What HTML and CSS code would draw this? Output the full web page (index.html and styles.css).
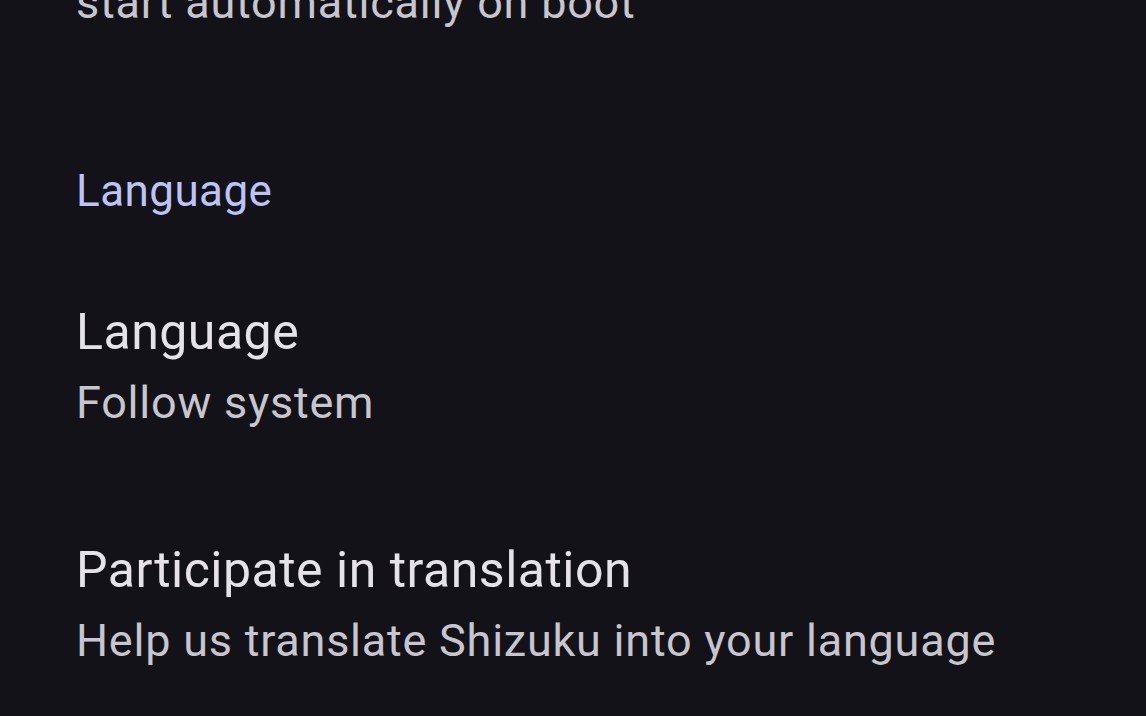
FILE: index.html
```html
<!DOCTYPE html>
<html lang="en">
<head>
<meta charset="utf-8">
<title>Settings</title>
<link rel="stylesheet" href="styles.css">
</head>
<body>
<main class="list">
  <div class="pref pref-partial">
    <div class="summary">start automatically on boot</div>
  </div>
  <div class="category">Language</div>
  <div class="pref">
    <div class="title">Language</div>
    <div class="summary">Follow system</div>
  </div>
  <div class="pref">
    <div class="title">Participate in translation</div>
    <div class="summary">Help us translate Shizuku into your language</div>
  </div>
</main>
</body>
</html>
```
FILE: styles.css
```css
html, body {
  margin: 0;
  padding: 0;
  background: #131218;
  height: 100%;
  overflow: hidden;
}
body {
  font-family: Roboto, "Noto Sans", sans-serif;
}
.list {
  display: flex;
  flex-direction: column;
  padding-left: 76px;
  margin-top: -33px;
}
.pref {
  display: flex;
  flex-direction: column;
  padding: 48px 0;
}
.pref-partial {
  padding-top: 0;
}
.title {
  font-size: 50px;
  line-height: 70px;
  color: #e5e2e9;
  letter-spacing: 0.01em;
}
.summary {
  font-size: 45px;
  line-height: 72px;
  color: #c7c5cd;
  letter-spacing: 0.017em;
}
.category {
  font-size: 44px;
  line-height: 60px;
  color: #bcc3f5;
  letter-spacing: 0.01em;
  padding: 74px 0 28px;
}
```
